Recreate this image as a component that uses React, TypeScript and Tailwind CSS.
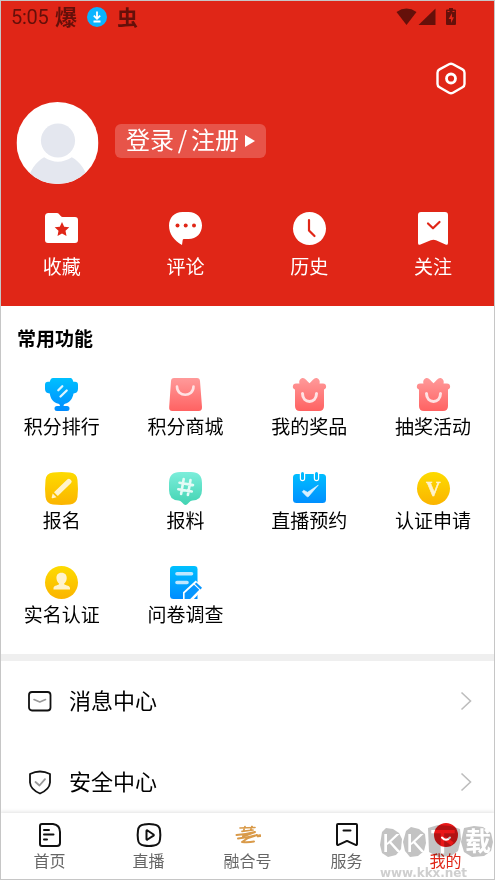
import type { ReactNode } from 'react'

const HEADER_ITEMS = [
  { label: '收藏', icon: <FolderIcon /> },
  { label: '评论', icon: <CommentIcon /> },
  { label: '历史', icon: <HistoryIcon /> },
  { label: '关注', icon: <FollowIcon /> },
]

const FEATURES = [
  { label: '积分排行', icon: <TrophyIcon /> },
  { label: '积分商城', icon: <BagIcon /> },
  { label: '我的奖品', icon: <GiftIcon /> },
  { label: '抽奖活动', icon: <GiftIcon /> },
  { label: '报名', icon: <PencilIcon /> },
  { label: '报料', icon: <TopicIcon /> },
  { label: '直播预约', icon: <CalendarIcon /> },
  { label: '认证申请', icon: <VerifyIcon /> },
  { label: '实名认证', icon: <PersonIcon /> },
  { label: '问卷调查', icon: <SurveyIcon /> },
]

function Icon({ children }: { children: ReactNode }) {
  return (
    <svg width="33" height="33" viewBox="0 0 33 33" fill="none" className="overflow-visible">
      {children}
    </svg>
  )
}

// shared gradients, referenced by id from the icons
function Gradients() {
  const colors = [
    { id: 'blue', from: '#00c0ff', to: '#008cff' },
    { id: 'pink', from: '#ff9a9a', to: '#ff6262' },
    { id: 'yellow', from: '#fddb00', to: '#fbb400' },
    { id: 'green', from: '#7ceedb', to: '#42d3b2' },
  ]
  return (
    <svg width="0" height="0" className="absolute">
      <defs>
        {colors.map(({ id, from, to }) => (
          <linearGradient key={id} id={id} x1="0" y1="0" x2="0" y2="33" gradientUnits="userSpaceOnUse">
            <stop stopColor={from} />
            <stop offset="1" stopColor={to} />
          </linearGradient>
        ))}
      </defs>
    </svg>
  )
}

function FolderIcon() {
  return (
    <Icon>
      <path d="M3.500 1h8.200q1.600 0 2.700 1.400l1.300 1.700q.7.9 2 .9H30q3 0 3 3v20q0 3-3 3H3q-3 0-3-3V4.500q0-3.500 3.500-3.500z" fill="#fff" />
      <path d="m17 10 2.200 4.700 5.100.6-3.800 3.500 1 5.100-4.500-2.500-4.500 2.500 1-5.100-3.800-3.500 5.100-.6z" fill="#e02617" />
    </Icon>
  )
}

function CommentIcon() {
  return (
    <Icon>
      <path d="M13.500 0h6C27.500 0 33 5.800 33 13.500S27.500 27 19.500 27h-4.600q-1 0-1.200 1l-.7 5C5 28.500 0 22 0 13.500 0 5.800 5.500 0 13.500 0z" fill="#fff" />
      <circle cx="8.500" cy="13.500" r="2" fill="#e02617" />
      <circle cx="16.700" cy="13.500" r="2" fill="#e02617" />
      <circle cx="25" cy="13.500" r="2" fill="#e02617" />
    </Icon>
  )
}

function HistoryIcon() {
  return (
    <Icon>
      <circle cx="16.500" cy="16.500" r="16.500" fill="#fff" />
      <path d="M16 8v10.500l5.500 5.500" stroke="#e02617" strokeWidth="2.200" strokeLinecap="round" strokeLinejoin="round" />
    </Icon>
  )
}

function FollowIcon() {
  return (
    <Icon>
      <path d="M4 0h24q3 0 3 3v28q0 2.500-2.500 1.600L19 28.300q-2.600-1.200-5.200 0l-10.300 4.300Q1 33.500 1 31V3q0-3 3-3z" fill="#fff" />
      <path d="m11 11.500 5 4.800 6.500-6.300" stroke="#e02617" strokeWidth="2.200" strokeLinecap="round" strokeLinejoin="round" />
    </Icon>
  )
}

function TrophyIcon() {
  return (
    <Icon>
      <path d="M8 0h17.500q2 0 2.800 3.800H30q3 0 3 3v4q0 3.600-2.600 4.200l-1.900.4C27.500 21 24.500 24.500 20 25.800q-1.500.6-1.500 2.200H22q2.500 0 2.500 2.500T22 33H12q-2.500 0-2.500-2.500T12 28h3q0-1.600-1.500-2.200C8.500 24.500 5.500 21 4.800 15.400L2.600 15Q0 14.400 0 10.800v-4q0-3 3-3h1.800Q5.500 0 8 0z" fill="url(#blue)" />
      <path d="m13.300 12.300 4-4M15.500 18.500l6.200-6" stroke="#dff5ff" strokeWidth="2.300" strokeLinecap="round" />
    </Icon>
  )
}

function BagIcon() {
  return (
    <Icon>
      <path d="M5 0h23q2.800 0 3 3l2 26q.2 4-3.300 4H3.300Q-.2 33 .2 29L2 3q.2-3 3-3z" fill="url(#pink)" />
      <path d="M8 8.500C8 19.500 24.500 19.500 24.500 8.500" stroke="#ffe2e3" strokeWidth="2.600" strokeLinecap="round" />
    </Icon>
  )
}

function GiftIcon() {
  return (
    <Icon>
      <path d="M10 0c2 0 4 3 6.500 5.200C19 3 21 0 23 0c2.500 0 4.500 2.500 3.500 5.500H30c4 0 4 5.500 1 6V28q0 5-5 5H7q-5 0-5-5V11.500c-3-.5-3-6 1-6h3.500C5.500 2.500 7.500 0 10 0z" fill="url(#pink)" />
      <path d="M9.500 15.500C9.500 26 23.500 26 23.500 15.500" stroke="#ffe2e3" strokeWidth="3" strokeLinecap="round" />
    </Icon>
  )
}

function PencilIcon() {
  return (
    <Icon>
      <path d="M8 .5Q16.500-.5 25 .5q7 .8 7.500 7.500.9 8.500 0 17-.8 6.700-7.500 7.500-8.500.9-17 0Q1.300 31.700.5 25q-.9-8.500 0-17Q1 1.300 8 .5z" fill="url(#yellow)" />
      <path d="M22.500 7.300q1.300-1.200 2.600 0l1 1q1.300 1.300 0 2.600L12.800 24 9 20.200zM7.700 21.500l3.800 3.800-3.800 1q-1.300.2-1-1z" fill="#fff3cc" />
    </Icon>
  )
}

function TopicIcon() {
  return (
    <Icon>
      <path d="M11 0h11q11 0 11 11v7q0 10-9.500 10.500-2 .2-3.300 1.800l-2 2q-1.700 1.400-3.400 0l-2-2q-1.300-1.600-3.300-1.800Q0 28 0 18v-7Q0 0 11 0z" fill="url(#green)" />
      <path d="m14.700 7-2.600 15M21.500 8l-2.600 15M10.500 10.800l13.500 2.300M9.300 17.200l13.500 2.300" stroke="#e4fbf6" strokeWidth="2.600" strokeLinecap="round" />
    </Icon>
  )
}

function CalendarIcon() {
  return (
    <Icon>
      <rect y="2" width="33" height="29" rx="3.500" fill="url(#blue)" />
      <path d="M6.800 0v6.200q0 3 2.700 3t2.700-3V0zM20.800 0v6.200q0 3 2.700 3t2.700-3V0z" fill="#fff" />
      <rect x="8" width="3" height="8" rx="1.500" fill="#00b8ff" />
      <rect x="22" width="3" height="8" rx="1.500" fill="#00b8ff" />
      <path d="m9.200 19.800 1.500-1.600 3.800 2.100 10.800-7.200-9.700 11.300q-.9.900-1.900 0z" fill="#d8f0ff" stroke="#d8f0ff" strokeWidth=".6" strokeLinejoin="round" />
    </Icon>
  )
}

function VerifyIcon() {
  return (
    <Icon>
      <circle cx="16.500" cy="16.500" r="16.500" fill="url(#yellow)" />
      <text x="16.200" y="24" textAnchor="middle" fontSize="20" fontWeight="700" fill="#fff3cc" stroke="#fff3cc" strokeWidth=".5" className="font-['Liberation_Serif',serif]">V</text>
    </Icon>
  )
}

function PersonIcon() {
  return (
    <Icon>
      <circle cx="16.500" cy="16.500" r="16.500" fill="url(#yellow)" />
      <path d="M16.500 6.800c3.600 0 5.500 2.400 5.200 5.700-.2 2.500-1.200 4-2.700 5.300 0 1.500 5.700 1.500 6 4.200v1.500H8.500V22c.3-2.700 5.700-2.700 5.700-4.200-1.500-1.300-2.500-2.800-2.700-5.300-.3-3.300 1.400-5.700 5-5.700z" fill="#fff3cc" />
    </Icon>
  )
}

function SurveyIcon() {
  return (
    <Icon>
      <path d="M4.500 0h20.700Q28.500 0 28.500 3.300V33h-24Q1 33 1 29.500v-26Q1 0 4.500 0z" fill="url(#blue)" />
      <path d="M8 7.700h14.500M8 16.500h10" stroke="#bfe7ff" strokeWidth="3.600" strokeLinecap="round" />
      <path d="M14 34v-7.700L26.700 14.500 35 22 24 34z" fill="#fff" />
      <path d="m25 18.700 5.300 5L21.200 33H15.600v-5.800z" fill="#0796ff" />
      <path d="m27.300 16.500 5.700 5.300-1.500 1.700-5.600-5.400z" fill="#0796ff" />
    </Icon>
  )
}

function StatusBar() {
  return (
    <div className="flex h-[32px] items-center justify-between pl-[10px] pr-[36px] text-[#65100a]">
      <div className="flex items-center">
        <span className="w-[44px] font-[Roboto,sans-serif] text-[20px] leading-[30px] tracking-[-0.3px]">5:05</span>
        <span className="mb-[5px] text-[22px] font-bold leading-[30px]">爆</span>
        <svg width="20" height="20" viewBox="0 0 20 20" fill="none" className="ml-[10px] mr-[10px]">
          <circle cx="10" cy="10" r="10" fill="#0ab4ff" />
          <path d="M10 4.500v7M6.800 8.700 10 11.800l3.200-3.100M6.500 14.500h7" stroke="#fff" strokeWidth="1.800" />
        </svg>
        <span className="mb-[3px] text-[21px] font-bold leading-[30px]">虫</span>
      </div>
      <svg width="62" height="20" viewBox="0 0 62 20" fill="currentColor">
        <path d="M.5 5Q10.500-1.800 20.500 5L10.500 18z" />
        <path d="M39.500 1.500V18h-17z" />
        <path d="M53 1h4v1.500h2q1 0 1 1V17q0 1-1 1h-8q-1 0-1-1V3.500q0-1 1-1h2z" />
        <path d="M56 6.300 52.600 12H55v4l3-5.800h-2zM51.500 4h2v1h-2zM56.500 4h2v1h-2z" fill="#e02617" />
      </svg>
    </div>
  )
}

function Header() {
  return (
    <header className="h-[305px] bg-[#e02617] text-white">
      <StatusBar />
      <div className="flex justify-end pr-[27px] pt-[29px]">
        <svg width="32" height="34" viewBox="0 0 32 34" fill="none" stroke="#fff" strokeWidth="2.400">
          <path d="M14 2.300q2-1.100 4 0l9.500 5.100q2 1.100 2 3.300v11.200q0 2.200-2 3.300L18 30.700q-2 1.100-4 0l-9.500-5.500q-2-1.100-2-3.300V10.700q0-2.200 2-3.300z" />
          <circle cx="16" cy="16.500" r="4.500" strokeWidth="2.800" />
        </svg>
      </div>
      <div className="mt-[6px] flex items-start pl-[15px]">
        <svg width="83" height="82" viewBox="0 0 83 83">
          <clipPath id="avatar"><circle cx="41.500" cy="41.500" r="41.500" /></clipPath>
          <g clipPath="url(#avatar)">
            <rect width="83" height="83" fill="#fff" />
            <path d="M11 83C12 71 20 60 28 56Q42 65 56 56C64 60 72 71 73 83z" fill="#e4e7ef" />
            <circle cx="42" cy="39" r="17.300" fill="#e4e7ef" />
          </g>
        </svg>
        <div className="ml-4 mt-[22px] flex h-[34px] w-[151px] items-center rounded-md bg-[#e75449] pl-[11px] text-[24px] leading-[28px]">
          <span className="mb-[5px]">登录</span>
          <span className="mb-[5px] w-[17px] text-center">/</span>
          <span className="mb-[5px]">注册</span>
          <svg width="10" height="12" viewBox="0 0 10 12" className="ml-[6px]"><path d="M0 0 10 6 0 12z" fill="#fff" /></svg>
        </div>
      </div>
      <div className="-mx-px mt-7 grid grid-cols-4">
        {HEADER_ITEMS.map(item => (
          <div key={item.label} className="flex flex-col items-center">
            {item.icon}
            <span className="mt-[7px] text-[19px] leading-[28px]">{item.label}</span>
          </div>
        ))}
      </div>
    </header>
  )
}

function MenuRow({ label, children }: { label: string; children: ReactNode }) {
  return (
    <div className="flex h-[81px] items-center pl-[26px] pr-[22px]">
      <svg width="26" height="26" viewBox="0 0 26 26" fill="none" strokeLinecap="round" strokeLinejoin="round">
        {children}
      </svg>
      <span className="mb-[4px] ml-4 flex-1 text-[22px] leading-[32px]">{label}</span>
      <svg width="12" height="20" viewBox="0 0 12 20" fill="none" stroke="#bdbdbd" strokeWidth="1.600">
        <path d="m1.500 1.500 9 8.500-9 8.500" />
      </svg>
    </div>
  )
}

function TabItem({ label, active, children }: { label: string; active?: boolean; children: ReactNode }) {
  return (
    <div className="flex flex-col items-center pt-[9px]">
      <svg width="26" height="26" viewBox="0 0 26 26" fill="none" stroke="#111" strokeWidth="2" strokeLinecap="round" strokeLinejoin="round">
        {children}
      </svg>
      <span className={`text-[16px] leading-[24px] ${active ? 'text-[#e02617]' : 'text-[#666]'}`}>{label}</span>
    </div>
  )
}

function TabBar() {
  return (
    <nav className="-mx-px grid h-[66px] grid-cols-5 bg-white shadow-[0_-1px_4px_rgba(0,0,0,0.12)]">
      <TabItem label="首页">
        <path d="M5 2h11q7 1 7 8v11q0 3-3 3H5q-2 0-2-2V4q0-2 2-2zM7 8h5M7 12.500h9.500M7 17.500h3" />
      </TabItem>
      <TabItem label="直播">
        <path d="M8 2.500q5-1 10 0 5.500.5 6 6 .7 4.500 0 9-.5 5.500-6 6-5 1-10 0-5.500-.5-6-6-.7-4.500 0-9 .5-5.500 6-6z" />
        <path d="M10.500 9v8q0 1 1 .5l6-3.800q.7-.6 0-1.200l-6-4q-1-.5-1 .5z" />
      </TabItem>
      <TabItem label="融合号">
        <g stroke="#d99a49" strokeWidth="2">
          <path d="m5 6 15-.5M7 9.300l11-1.300M10 4.500 8.500 9M17 4.500 15.500 8" strokeWidth="1.700" />
          <path d="M1.500 13q9-.5 18.500-3L8 14.500" />
          <path d="M3 16.500q9-.5 19-3.500l-9 3-6 4q7 .5 12-.5" />
          <path d="m23 14 2-.4" strokeWidth="2.800" />
        </g>
      </TabItem>
      <TabItem label="服务">
        <path d="M4 2h18q1 0 1 1v19q0 1.500-1.400.8L14 19.300q-1-.4-2 0l-7.600 3.500Q3 23.500 3 22V3q0-1 1-1zM9.500 8.500h7" />
      </TabItem>
      <TabItem label="我的" active>
        <circle cx="13" cy="13" r="12" fill="#e91718" stroke="none" />
        <path d="M9 15.500q4 4.500 8 0" stroke="#fff" />
      </TabItem>
    </nav>
  )
}

function Watermark() {
  return (
    <svg width="118" height="58" viewBox="0 0 118 58" className="pointer-events-none absolute bottom-0 right-0 mix-blend-multiply">
      <g fill="#c3c3c3">
        <path d="m6 11 4-4 7 1 6 4 3 6-1 10-5 6-8 2-6-4-2-8z" />
        <path d="m30 10 5-4 8 2 6 5 1 9-2 8-6 5-8 1-5-6-2-9z" />
        <path d="m52 7 10-3 13 1 9 3 1 10-3 12-7 5-13 1-9-5z" />
        <path d="m88 7 10-2 9 1 8 6 2 9-2 9-7 5-12 1-8-5-3-10z" />
      </g>
      <g fill="#fff" fontSize="26" fontWeight="700" className="font-['Liberation_Sans','Noto_Sans_CJK_SC',sans-serif]">
        <text x="6" y="31" fontWeight="400" textLength="19" lengthAdjust="spacingAndGlyphs">K</text>
        <text x="30" y="31" fontWeight="400" textLength="19" lengthAdjust="spacingAndGlyphs">K</text>
        <text x="54" y="30">下</text>
        <text x="89" y="30">载</text>
      </g>
      <text x="4" y="56" fontSize="12" fontWeight="700" fill="#cfcfcf" textLength="87" className="font-['DejaVu_Sans',sans-serif]">www.kkx.net</text>
    </svg>
  )
}

export default function App() {
  return (
    <div className="relative flex h-[880px] w-[495px] flex-col overflow-hidden border border-[#c6c6c6] bg-white font-['Noto_Sans_CJK_SC',sans-serif] text-black">
      <Gradients />
      <Header />
      <section className="h-[348px] pt-[18px]">
        <h2 className="pl-4 text-[19px] font-bold leading-[28px]">常用功能</h2>
        <div className="-mx-px mt-[26px] grid auto-rows-[94px] grid-cols-4">
          {FEATURES.map(item => (
            <div key={item.label} className="flex flex-col items-center">
              {item.icon}
              <span className="mt-px text-[19px] leading-[28px]">{item.label}</span>
            </div>
          ))}
        </div>
      </section>
      <div className="h-[7px] bg-[#efefef]" />
      <section className="h-[152px] overflow-hidden">
        <div className="-mt-px">
          <MenuRow label="消息中心">
            <rect x="2" y="4" width="21.500" height="18.500" rx="3" stroke="#111" strokeWidth="1.800" />
            <path d="m7 11.500 5.800 2.500 5.700-2.500" stroke="#999" strokeWidth="1.600" />
          </MenuRow>
          <MenuRow label="安全中心">
            <path d="M3 5q10-5 20 0v8.500q-.5 7-10 11-9.500-4-10-11z" stroke="#111" strokeWidth="1.800" />
            <path d="m8.500 13 4 3.500 5.500-6.300" stroke="#999" strokeWidth="1.800" />
          </MenuRow>
        </div>
      </section>
      <TabBar />
      <Watermark />
    </div>
  )
}
